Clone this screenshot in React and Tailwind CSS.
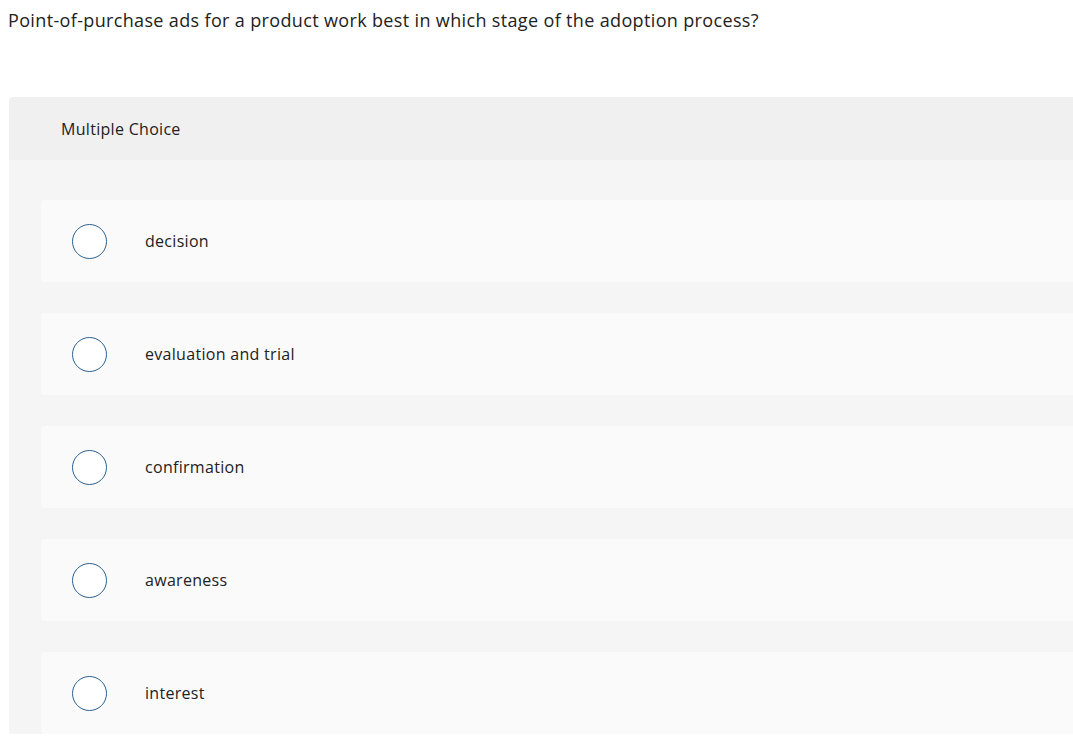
const options = ["decision", "evaluation and trial", "confirmation", "awareness", "interest"];

export default function App() {
  return (
    <div className="w-[1073px] h-[737px] overflow-hidden bg-white text-[#222] font-['Open_Sans','Lato',sans-serif] tracking-[0.3px]">
      <p className="pl-2 pt-[7px] text-[18px] leading-[26px] tracking-[0.35px] text-[#222]">
        Point-of-purchase ads for a product work best in which stage of the adoption process?
      </p>
      <div className="ml-[9px] mt-[64px] w-[1100px] rounded-tl bg-[#f5f5f5]">
        <div className="h-[63px] flex items-center pl-[52px] bg-[#f0f0f0] rounded-tl text-[16px] text-[#222]">
          Multiple Choice
        </div>
        <div className="pl-8 pt-10 flex flex-col gap-[31px]">
          {options.map((o) => (
            <div key={o} className="h-[82px] flex items-center pl-[31px] bg-[#fafafa] rounded">
              <span className="w-[35px] h-[35px] rounded-full border-[1.5px] border-[#2d6091] bg-white shrink-0" />
              <span className="ml-[38px] text-[16px] text-[#222]">{o}</span>
            </div>
          ))}
        </div>
      </div>
    </div>
  );
}
